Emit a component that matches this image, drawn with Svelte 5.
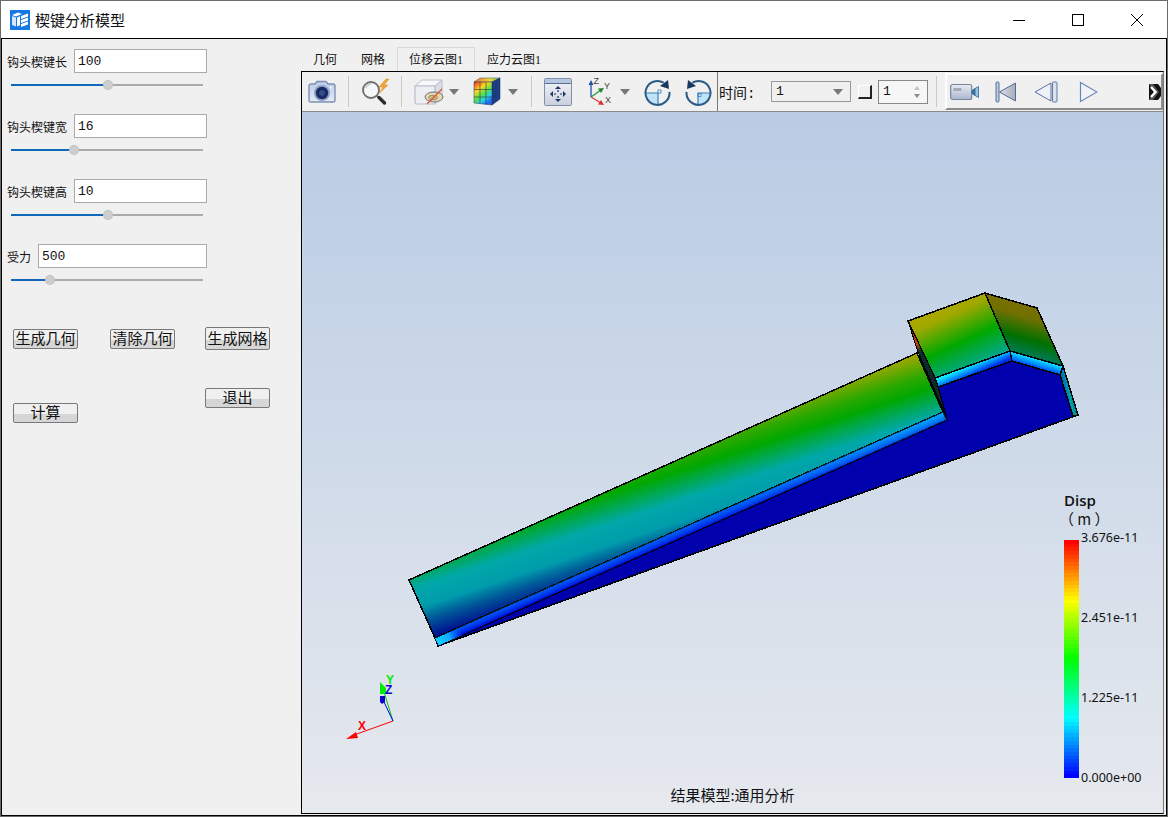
<script>
  const params = [
    { label: "钩头楔键长", value: "100", pct: 50.5 },
    { label: "钩头楔键宽", value: "16", pct: 32.8 },
    { label: "钩头楔键高", value: "10", pct: 50.5 },
    { label: "受力", value: "500", pct: 20.3 }
  ];
  const tabs = ["几何", "网格", "位移云图1", "应力云图1"];
  const activeTab = 2;

  // 64 discrete bands, red on top, blue at the bottom
  const bands = Array.from({ length: 64 }, (_, i) => `hsl(${(240 * i) / 63}, 100%, 50%)`);
  const ticks = ["3.676e-11", "2.451e-11", "1.225e-11", "0.000e+00"];
</script>

<div class="window">
  <div class="titlebar">
    <svg class="appicon" viewBox="0 0 20 20">
      <rect width="20" height="20" fill="#1578e5" />
      <path d="M2 5 L8 2.5 L12 4 L6 6.5 Z" fill="#fff" />
      <path d="M2 6 L6 7.5 L6 16.5 L2 15 Z" fill="#d5e8fb" />
      <path d="M7 7.5 L10 6.3 L10 15.2 L7 16.5 Z" fill="#fff" />
      <path d="M11 6 L18 3.5 L18 6.5 L11 9 Z" fill="#fff" />
      <path d="M11 10 L18 7.5 L18 10.5 L11 13 Z" fill="#fff" />
      <path d="M11 14 L18 11.5 L18 14.5 L11 17 Z" fill="#fff" />
    </svg>
    <span class="apptitle">楔键分析模型</span>
    <div class="winbtns">
      <div class="winbtn"><svg width="12" height="12"><path d="M0 6.5H12" stroke="#000" /></svg></div>
      <div class="winbtn"><svg width="12" height="12"><rect x=".5" y=".5" width="11" height="11" fill="none" stroke="#000" /></svg></div>
      <div class="winbtn"><svg width="12" height="12"><path d="M0 0L12 12M12 0L0 12" stroke="#000" /></svg></div>
    </div>
  </div>

  <div class="body">
    <div class="side">
      {#each params as p}
        <div class="param">
          <div class="row">
            <span class="plabel">{p.label}</span>
            <input class="pinput" value={p.value} />
          </div>
          <div class="slider">
            <div class="fill" style="width: {p.pct}%"></div>
            <div class="thumb" style="left: {p.pct}%"></div>
          </div>
        </div>
      {/each}

      <div class="btnrow">
        <button class="btn">生成几何</button>
        <button class="btn">清除几何</button>
        <button class="btn tall">生成网格</button>
      </div>
      <div class="btnrow2">
        <button class="btn calc">计算</button>
        <button class="btn">退出</button>
      </div>
    </div>

    <div class="main">
      <div class="tabs">
        {#each tabs as t, i}
          <div class="tab" class:active={i === activeTab}>{t}</div>
        {/each}
      </div>

      <div class="frame">
        <div class="toolbar">
          <!-- camera -->
          <svg class="m6" width="28" height="24" viewBox="0 0 28 24">
            <defs>
              <linearGradient id="camBody" x1="0" y1="0" x2="0" y2="1">
                <stop offset="0" stop-color="#bccde8" />
                <stop offset="1" stop-color="#e2eaf6" />
              </linearGradient>
            </defs>
            <path d="M1 6 Q1 4 3 4 H7 L9 1.5 H18 L20 4 H25 Q27 4 27 6 V20 Q27 22 25 22 H3 Q1 22 1 20 Z" fill="url(#camBody)" stroke="#7e90b2" stroke-width="1.4" />
            <circle cx="14" cy="13" r="8" fill="#8ea1c4" />
            <circle cx="14" cy="13" r="6.2" fill="#1a2b64" />
            <circle cx="14" cy="13" r="2.8" fill="#34508f" />
            <circle cx="23" cy="7.5" r="1" fill="#fff" />
          </svg>
          <div class="sep m12"></div>

          <!-- zoom with lightning -->
          <svg class="m12" width="30" height="30" viewBox="0 0 30 30">
            <circle cx="10" cy="13" r="8" fill="#f6f7f9" stroke="#6e6e6e" stroke-width="1.8" />
            <path d="M5 11 A6 6 0 0 1 10 7" fill="none" stroke="#c8ccd2" stroke-width="1.5" />
            <path d="M16 19 L18 21" stroke="#777" stroke-width="2" />
            <path d="M18 20.5 L23.5 26" stroke="#2c2c2c" stroke-width="3.4" stroke-linecap="round" />
            <path d="M25 2 L18 10 L22 10 L18.5 16 L27 8 L23 8 L28 2 Z" fill="#f0a436" stroke="#d98b22" stroke-width=".5" />
          </svg>
          <div class="sep m10"></div>

          <!-- clip cube -->
          <svg class="m12" width="30" height="30" viewBox="0 0 30 30">
            <path d="M1 9 L8 3 H28 L21 9 Z" fill="#f7f8fa" stroke="#b7bfcc" />
            <path d="M21 9 L28 3 V20 L21 27 Z" fill="#d8dde6" stroke="#b7bfcc" />
            <path d="M1 9 H21 V27 H3 Q1 27 1 25 Z" fill="#eceef2" stroke="#b7bfcc" stroke-width="1.2" />
            <ellipse cx="20" cy="20" rx="9" ry="5" fill="#ecd6a6" stroke="#66718a" stroke-width="1" />
            <ellipse cx="19" cy="20.5" rx="4.5" ry="2.2" fill="#c9b98f" stroke="#7a7a70" stroke-width=".7" />
            <path d="M13 27 L28 12" stroke="#d9552a" stroke-width="1.2" />
          </svg>
          <svg class="m4 arrow" width="12" height="8"><path d="M1 1H11L6 7Z" fill="#777" /></svg>

          <!-- colour cube -->
          <svg class="m13" width="28" height="30" viewBox="0 0 28 30">
            <defs>
              <linearGradient id="cubeFront" x1="0" y1="0" x2=".6" y2="1">
                <stop offset="0" stop-color="#f02c1c" />
                <stop offset=".35" stop-color="#fbd820" />
                <stop offset=".6" stop-color="#58e048" />
                <stop offset=".82" stop-color="#20d0ec" />
                <stop offset="1" stop-color="#2068f0" />
              </linearGradient>
              <linearGradient id="cubeTop" x1="0" y1="0" x2="1" y2="0">
                <stop offset="0" stop-color="#f07030" />
                <stop offset=".6" stop-color="#f0d840" />
                <stop offset="1" stop-color="#70d050" />
              </linearGradient>
            </defs>
            <path d="M1 5 L7 1 H27 L19 5 Z" fill="url(#cubeTop)" stroke="#3a4a60" stroke-width=".5" />
            <path d="M19 5 L27 1 V22 L19 28 Z" fill="#1b3f8c" stroke="#16284e" stroke-width=".5" />
            <path d="M1 5 H19 V28 L1 26 Z" fill="url(#cubeFront)" stroke="#24344c" stroke-width=".5" />
            <path d="M7 5 V26.7 M13 5 V27.4 M1 12.5 H19 M1 20 H19 M23 3 V25 M19 12.5 L27 8.5 M19 20 L27 15.5" stroke="#2a3448" stroke-width=".6" fill="none" />
          </svg>
          <svg class="m6 arrow" width="12" height="8"><path d="M1 1H11L6 7Z" fill="#777" /></svg>
          <div class="sep m12"></div>

          <!-- fit view -->
          <svg class="m11" width="30" height="30" viewBox="0 0 30 30">
            <defs>
              <linearGradient id="fitBg" x1="0" y1="0" x2="0" y2="1">
                <stop offset="0" stop-color="#f5f6f9" />
                <stop offset="1" stop-color="#c9d0dd" />
              </linearGradient>
            </defs>
            <rect x="1.5" y="1.5" width="27" height="27" rx="1" fill="url(#fitBg)" stroke="#8290ab" />
            <rect x="2" y="2" width="26" height="4" fill="#b6c7e2" />
            <path d="M2 6.5H28" stroke="#5c6f93" />
            <g fill="#1c3566">
              <path d="M15 9 L18 12 H12 Z" />
              <path d="M15 25 L18 22 H12 Z" />
              <path d="M7 17 L10 14 V20 Z" />
              <path d="M23 17 L20 14 V20 Z" />
            </g>
            <path d="M15 13 V15 M15 19 V21 M11 17 H13 M17 17 H19" stroke="#1c3566" stroke-width="1.2" />
          </svg>

          <!-- axes -->
          <svg class="m14 axes" width="26" height="30" viewBox="0 0 26 30">
            <path d="M4 20 V7" stroke="#2f5fb5" stroke-width="1.4" />
            <path d="M4 3 L1.5 8 H6.5 Z" fill="#2450a8" />
            <path d="M4 20 L14 13" stroke="#2a9a3e" stroke-width="1.4" />
            <path d="M17 11 L11 11.5 L14 16 Z" fill="#1e8a30" />
            <path d="M4 20 L14 26" stroke="#e04040" stroke-width="1.4" />
            <path d="M17 28 L11 27.5 L14 23 Z" fill="#d83030" />
            <text x="6.5" y="7">Z</text>
            <text x="17" y="12">Y</text>
            <text x="18" y="26">X</text>
          </svg>
          <svg class="m6 arrow" width="12" height="8"><path d="M1 1H11L6 7Z" fill="#777" /></svg>

          <!-- rotate right -->
          <svg class="m12" width="28" height="28" viewBox="0 0 28 28">
            <path d="M3 15 H15 V27 A12 12 0 0 1 3 15 Z" fill="#bfe4f7" />
            <path d="M3 15 H15 V27" fill="none" stroke="#3b7fb4" stroke-width="1.2" />
            <rect x="15" y="12" width="3" height="3" fill="none" stroke="#3b7fb4" stroke-width=".8" />
            <path d="M22 5.5 A12 12 0 1 0 26.5 15.5" fill="none" stroke="#2a5b86" stroke-width="2" transform="rotate(-8 15 15)" />
            <path d="M25 2 L26 11 L17 8 Z" fill="#17395f" />
          </svg>
          <!-- rotate left -->
          <svg class="m14" width="28" height="28" viewBox="0 0 28 28">
            <path d="M25 15 H13 V27 A12 12 0 0 0 25 15 Z" fill="#bfe4f7" />
            <path d="M25 15 H13 V27" fill="none" stroke="#3b7fb4" stroke-width="1.2" />
            <rect x="13" y="15.5" width="3" height="3" fill="none" stroke="#3b7fb4" stroke-width=".8" />
            <path d="M6 5.5 A12 12 0 1 1 1.5 15.5" fill="none" stroke="#2a5b86" stroke-width="2" transform="rotate(8 13 15)" />
            <path d="M3 2 L2 11 L11 8 Z" fill="#17395f" />
          </svg>

          <div class="sep dark m4"></div>
          <span class="timelabel">时间:</span>
          <div class="combo"><span>1</span><svg width="12" height="8"><path d="M1 1H11L6 7Z" fill="#777" /></svg></div>
          <div class="check"></div>
          <div class="spin">
            <span>1</span>
            <svg width="8" height="14"><path d="M4 1L7 5H1Z" fill="#c4c4c4" /><path d="M4 13L7 9H1Z" fill="#8a8a8a" /></svg>
          </div>
          <div class="sep m8"></div>

          <div class="player">
            <!-- video -->
            <svg class="m3" width="30" height="18" viewBox="0 0 30 18">
              <defs>
                <linearGradient id="vidBody" x1="0" y1="0" x2="0" y2="1">
                  <stop offset="0" stop-color="#e8ecf3" />
                  <stop offset="1" stop-color="#aab6cd" />
                </linearGradient>
              </defs>
              <rect x=".7" y="1.5" width="21" height="15" rx="2" fill="url(#vidBody)" stroke="#76869f" stroke-width="1.2" />
              <rect x="3.5" y="5" width="8" height="3" fill="#a4a9b3" />
              <path d="M22 7.5 L25 5.5 V12.5 L22 10.5 Z" fill="#2f78a8" stroke="#3d5f8a" stroke-width=".8" />
              <path d="M25 5.5 L28.5 3.5 V14.5 L25 12.5 Z" fill="#8ec8e4" stroke="#3d5f8a" stroke-width=".8" />
            </svg>
            <!-- first frame -->
            <svg class="m15" width="22" height="22" viewBox="0 0 22 22">
              <defs>
                <linearGradient id="firstTri" x1="0" y1="0" x2="1" y2="0">
                  <stop offset="0" stop-color="#dfe2e8" />
                  <stop offset="1" stop-color="#a6acb6" />
                </linearGradient>
              </defs>
              <rect x="1" y="1" width="3" height="20" rx="1" fill="#c4cad6" stroke="#56719f" />
              <path d="M4.5 11 L20.5 2 V20 Z" fill="url(#firstTri)" stroke="#4f6c9c" />
            </svg>
            <!-- previous -->
            <svg class="m17" width="24" height="22" viewBox="0 0 24 22">
              <path d="M1 11 L17 2 V20 Z" fill="#eef1f6" stroke="#56719f" />
              <rect x="18.5" y="1" width="4.5" height="20" rx="1" fill="#dde2ea" stroke="#5f79a6" />
            </svg>
            <!-- play -->
            <svg class="m21" width="19" height="22" viewBox="0 0 19 22">
              <path d="M1.5 1.5 L18 11 L1.5 20.5 Z" fill="#f1f3f8" stroke="#6a86b5" stroke-width="1.2" />
            </svg>
            <!-- overflow -->
            <svg class="m51" width="12" height="18" viewBox="0 0 12 18">
              <rect x="0" y="1" width="12" height="16" fill="#111" />
              <path d="M0 1 H4 L10 9 L4 17 H0 L5 9 Z" fill="#555" />
              <path d="M2 4 L6.5 9 L2 14" fill="none" stroke="#fff" stroke-width="2.4" />
              <path d="M12 1 H9 L12 5 Z M12 17 H9 L12 13 Z" fill="#eee" />
            </svg>
          </div>
        </div>

        <div class="canvas">
          <svg class="scene" viewBox="302 112 861 701">
            <defs>
              <linearGradient id="longTop" gradientUnits="userSpaceOnUse" x1="194" y1="589" x2="233.2" y2="707.8">
                <stop offset=".016" stop-color="#a8a800" />
                <stop offset=".2" stop-color="#30a800" />
                <stop offset=".32" stop-color="#00a800" />
                <stop offset=".544" stop-color="#00a8a8" />
                <stop offset=".704" stop-color="#009cac" />
                <stop offset=".816" stop-color="#005898" />
                <stop offset=".96" stop-color="#001090" />
              </linearGradient>
              <linearGradient id="headFront" gradientUnits="userSpaceOnUse" x1="942" y1="302" x2="974" y2="372">
                <stop offset="0" stop-color="#b0a800" />
                <stop offset=".2" stop-color="#a0a800" />
                <stop offset=".58" stop-color="#00a800" />
                <stop offset="1" stop-color="#00a8a8" />
              </linearGradient>
              <linearGradient id="headSide" gradientUnits="userSpaceOnUse" x1="1014" y1="298" x2="998" y2="356">
                <stop offset="0" stop-color="#7c7000" />
                <stop offset=".25" stop-color="#707000" />
                <stop offset=".6" stop-color="#007000" />
                <stop offset="1" stop-color="#008080" />
              </linearGradient>
              <linearGradient id="stripLen" gradientUnits="userSpaceOnUse" x1="435" y1="638" x2="945" y2="414">
                <stop offset="0" stop-color="#0030ff" />
                <stop offset=".55" stop-color="#0030ff" />
                <stop offset="1" stop-color="#0898ff" />
              </linearGradient>
              <linearGradient id="stripDepth" gradientUnits="userSpaceOnUse" x1="690" y1="524.5" x2="693.5" y2="532.5">
                <stop offset="0" stop-color="#00b0ff" stop-opacity=".35" />
                <stop offset="1" stop-color="#0000c0" stop-opacity=".6" />
              </linearGradient>
              <linearGradient id="stripEnd" gradientUnits="userSpaceOnUse" x1="436" y1="642" x2="462" y2="630">
                <stop offset="0" stop-color="#10d8ff" />
                <stop offset=".5" stop-color="#10a8ff" />
                <stop offset="1" stop-color="#0050ff" stop-opacity="0" />
              </linearGradient>
              <linearGradient id="headStrip" gradientUnits="userSpaceOnUse" x1="971" y1="365" x2="975" y2="374">
                <stop offset="0" stop-color="#10e8ff" />
                <stop offset=".5" stop-color="#0090ff" />
                <stop offset="1" stop-color="#0030e8" />
              </linearGradient>
              <linearGradient id="sideStrip" gradientUnits="userSpaceOnUse" x1="1038" y1="359" x2="1035" y2="369">
                <stop offset="0" stop-color="#10e8ff" />
                <stop offset=".5" stop-color="#0090ff" />
                <stop offset="1" stop-color="#0030e8" />
              </linearGradient>
              <linearGradient id="wedge" gradientUnits="userSpaceOnUse" x1="908" y1="321" x2="925" y2="362">
                <stop offset="0" stop-color="#e83010" />
                <stop offset=".55" stop-color="#c04010" />
                <stop offset=".75" stop-color="#083028" />
                <stop offset="1" stop-color="#0c2c2c" />
              </linearGradient>
              <linearGradient id="sliver" gradientUnits="userSpaceOnUse" x1="1060" y1="372" x2="1072" y2="370">
                <stop offset="0" stop-color="#0060c0" />
                <stop offset=".5" stop-color="#00a0a8" />
                <stop offset="1" stop-color="#007070" />
              </linearGradient>
            </defs>

            <g shape-rendering="crispEdges" stroke="#000" stroke-width="1.5" stroke-linejoin="round">
              <polygon points="438,646 947,420 938,387 1012,361 1060,375 1073,416 1078,415" fill="#0000ac" />
              <polygon points="409,580 917,353 943,412 435,638" fill="url(#longTop)" />
              <polygon points="435,638 943,412 947,420 438,646" fill="url(#stripLen)" />
              <polygon points="435,638 943,412 947,420 438,646" fill="url(#stripDepth)" stroke="none" />
              <polygon points="435.5,638.5 462,627 465,634 438.5,645.5" fill="url(#stripEnd)" stroke="none" />
              <polygon points="908,321 985,293 1010,351 935,378" fill="url(#headFront)" />
              <polygon points="985,293 1037,308 1063,366 1010,351" fill="url(#headSide)" />
              <polygon points="935,378 1010,351 1012,361 938,387" fill="url(#headStrip)" />
              <polygon points="1010,351 1063,366 1060,375 1012,361" fill="url(#sideStrip)" />
              <polygon points="1063,366 1078,415 1073,416 1060,375" fill="url(#sliver)" />
              <polygon points="908,321 935,378 938,387 946,416 918,352" fill="url(#wedge)" stroke-width="1" />
            </g>

            <!-- orientation triad -->
            <g class="triad">
              <path d="M393 721 L354 735" stroke="#f00" />
              <path d="M346 739 L356 732 L358 738 Z" fill="#f00" />
              <path d="M393 721 L384 692" stroke="#0c0" />
              <path d="M380 682 L386 688 L386 694 L380 694 Z" fill="#0e0" />
              <path d="M393 721 L384 702" stroke="#00f" />
              <path d="M380 696 H385 V702 L382 704 L380 702 Z" fill="#10c" />
              <text x="358" y="730" fill="#f00">X</text>
              <text x="386" y="684" fill="#0e0">Y</text>
              <text x="385" y="694" fill="#10c">Z</text>
            </g>
          </svg>

          <div class="legend">
            <div class="legtitle">Disp</div>
            <div class="legunit">（ m ）</div>
            <div class="legbody">
              <div class="colorbar">
                {#each bands as c}
                  <div class="band" style="background: {c}"></div>
                {/each}
              </div>
              <div class="ticks">
                {#each ticks as t}
                  <span>{t}</span>
                {/each}
              </div>
            </div>
          </div>

          <div class="caption">结果模型:通用分析</div>
        </div>
      </div>
    </div>
  </div>
</div>

<style>
  :global(body) {
    margin: 0;
  }
  .window {
    width: 1168px;
    height: 817px;
    box-sizing: border-box;
    border: 1px solid #6b6b6b;
    display: flex;
    flex-direction: column;
    background: #fff;
    font-family: "Noto Sans CJK SC", sans-serif;
    color: #111;
    overflow: hidden;
  }
  .titlebar {
    height: 37px;
    flex: none;
    display: flex;
    align-items: center;
    padding-left: 9px;
    background: #fff;
  }
  .appicon {
    width: 20px;
    height: 20px;
  }
  .apptitle {
    margin-left: 5px;
    font-size: 15px;
  }
  .winbtns {
    margin-left: auto;
    padding-right: 1px;
    display: flex;
  }
  .winbtn {
    width: 59px;
    height: 37px;
    display: flex;
    align-items: center;
    justify-content: center;
  }
  .body {
    flex: 1;
    min-height: 0;
    display: flex;
    border: 1px solid #000;
    background: #f0f0f0;
  }
  .side {
    width: 299px;
    flex: none;
    padding-top: 10px;
    box-sizing: border-box;
  }
  .param {
    height: 65px;
    padding-left: 5px;
  }
  .row {
    width: 200px;
    height: 24px;
    display: flex;
    align-items: center;
    gap: 7px;
  }
  .plabel {
    font-size: 12px;
    flex: none;
  }
  .pinput {
    flex: 1;
    min-width: 0;
    height: 24px;
    box-sizing: border-box;
    border: 1px solid #aaa;
    background: #fff;
    padding: 0 3px;
    margin: 0;
    font-family: "Liberation Mono", monospace;
    font-size: 13px;
    color: #111;
    outline: none;
  }
  .slider {
    position: relative;
    width: 192px;
    height: 2px;
    margin: 11px 0 0 4px;
    background: #aaa;
  }
  .fill {
    height: 2px;
    background: #0f69b8;
  }
  .thumb {
    position: absolute;
    top: -4px;
    width: 10px;
    height: 10px;
    margin-left: -5px;
    border-radius: 50%;
    background: #cdcdcd;
    outline: 1px dotted #bbb;
    outline-offset: -1px;
  }
  .btnrow {
    display: flex;
    align-items: center;
    height: 23px;
    margin: 18px 0 0 11px;
  }
  .btnrow .btn:nth-child(2) {
    margin-left: 32px;
  }
  .btnrow .btn:nth-child(3) {
    margin-left: 30px;
  }
  .btnrow2 {
    display: flex;
    justify-content: space-between;
    align-items: flex-start;
    width: 257px;
    height: 35px;
    margin: 38px 0 0 11px;
  }
  .btn {
    width: 65px;
    height: 20px;
    box-sizing: border-box;
    margin: 0;
    padding: 0 0 2px;
    border: 1px solid #787878;
    border-radius: 2px;
    background: linear-gradient(#f0f0f0 0 55%, #d6d6d6 55%);
    font-family: "Noto Sans CJK SC", sans-serif;
    font-size: 15px;
    line-height: 16px;
    color: #111;
  }
  .tall {
    height: 23px;
  }
  .calc {
    margin-top: 15px;
  }
  .main {
    flex: 1;
    min-width: 0;
    display: flex;
    flex-direction: column;
    padding: 8px 2px 1px 0;
  }
  .tabs {
    display: flex;
    height: 24px;
    flex: none;
  }
  .tab {
    padding: 0 11px;
    font-size: 12px;
    line-height: 24px;
    box-sizing: border-box;
    border: 1px solid transparent;
    border-bottom: none;
    font-family: "Liberation Serif", "Noto Sans CJK SC", serif;
  }
  .tab.active {
    background: #f0f0f0;
    border-color: #d9d9d9;
  }
  .frame {
    flex: 1;
    min-height: 0;
    display: flex;
    flex-direction: column;
    border: 1px solid #000;
    border-right-color: #777;
  }
  .toolbar {
    height: 40px;
    flex: none;
    box-sizing: border-box;
    display: flex;
    align-items: center;
    background: #f0f0f0;
    border-bottom: 1px solid #8a8a8a;
  }
  .toolbar svg {
    flex: none;
    display: block;
  }
  .sep {
    width: 1px;
    align-self: stretch;
    margin-top: 4px;
    margin-bottom: 4px;
    background: #c8c8c8;
    flex: none;
  }
  .sep.dark {
    background: #777;
    margin-top: 0;
    margin-bottom: 0;
  }
  .m3 { margin-left: 3px; }
  .m4 { margin-left: 4px; }
  .m6 { margin-left: 6px; }
  .m8 { margin-left: 8px; }
  .m10 { margin-left: 10px; }
  .m11 { margin-left: 11px; }
  .m12 { margin-left: 12px; }
  .m13 { margin-left: 13px; }
  .m14 { margin-left: 14px; }
  .m15 { margin-left: 15px; }
  .m17 { margin-left: 17px; }
  .m21 { margin-left: 21px; }
  .m51 { margin-left: 51px; }
  .arrow {
    margin-top: 1px;
  }
  .axes text {
    font-family: "Liberation Sans", sans-serif;
    font-size: 9px;
    fill: #444;
  }
  .timelabel {
    margin-left: 1px;
    width: 38px;
    flex: none;
    font-family: "Liberation Mono", "Noto Sans CJK SC", monospace;
    font-size: 14px;
    white-space: nowrap;
  }
  .combo {
    margin-left: 14px;
    width: 80px;
    height: 21px;
    box-sizing: border-box;
    border: 1px solid #999;
    background: #f0f0f0;
    display: flex;
    align-items: center;
    justify-content: space-between;
    padding: 0 6px 0 4px;
    font-family: "Liberation Mono", monospace;
    font-size: 13px;
  }
  .check {
    margin-left: 7px;
    width: 14px;
    height: 14px;
    box-sizing: border-box;
    border: 1px solid #fff;
    border-right: 2px solid #222;
    border-bottom: 2px solid #222;
    flex: none;
  }
  .spin {
    margin-left: 6px;
    width: 50px;
    height: 24px;
    box-sizing: border-box;
    border: 1px solid #888;
    background: #f6f6f6;
    display: flex;
    align-items: center;
    justify-content: space-between;
    padding: 0 6px 0 4px;
    font-family: "Liberation Mono", monospace;
    font-size: 13px;
    flex: none;
  }
  .player {
    margin-left: 8px;
    flex: 1;
    height: 37px;
    box-sizing: border-box;
    display: flex;
    align-items: center;
    border-top: 2px solid #fff;
    border-left: 2px solid #fff;
    border-bottom: 2px solid #8c8c8c;
    border-right: 2px solid #8c8c8c;
  }
  .canvas {
    position: relative;
    flex: 1;
    min-height: 0;
    background: linear-gradient(#b9cce4, #e6e9ee);
    overflow: hidden;
  }
  .scene {
    display: block;
    width: 100%;
    height: 100%;
  }
  .triad path {
    stroke-width: 1;
  }
  .triad text {
    font-family: "Liberation Sans", sans-serif;
    font-size: 12px;
    font-weight: bold;
  }
  .legend {
    position: absolute;
    left: 762px;
    top: 379px;
    color: #111;
  }
  .legtitle {
    font-family: "Open Sans", sans-serif;
    font-size: 15px;
    font-weight: 600;
    line-height: 18px;
  }
  .legunit {
    font-size: 15px;
    line-height: 19px;
    margin: 0 0 12px -5px;
    white-space: nowrap;
  }
  .legbody {
    display: flex;
  }
  .colorbar {
    width: 15px;
    height: 238px;
    display: flex;
    flex-direction: column;
    flex: none;
  }
  .band {
    flex: 1;
  }
  .ticks {
    margin: -10px 0 0 2px;
    height: 256px;
    display: flex;
    flex-direction: column;
    justify-content: space-between;
    font-family: "Noto Sans", sans-serif;
    font-size: 12.5px;
    line-height: 16px;
    white-space: nowrap;
  }
  .caption {
    position: absolute;
    left: 0;
    right: 0;
    bottom: 9px;
    text-align: center;
    font-size: 15px;
    line-height: 18px;
  }
</style>
